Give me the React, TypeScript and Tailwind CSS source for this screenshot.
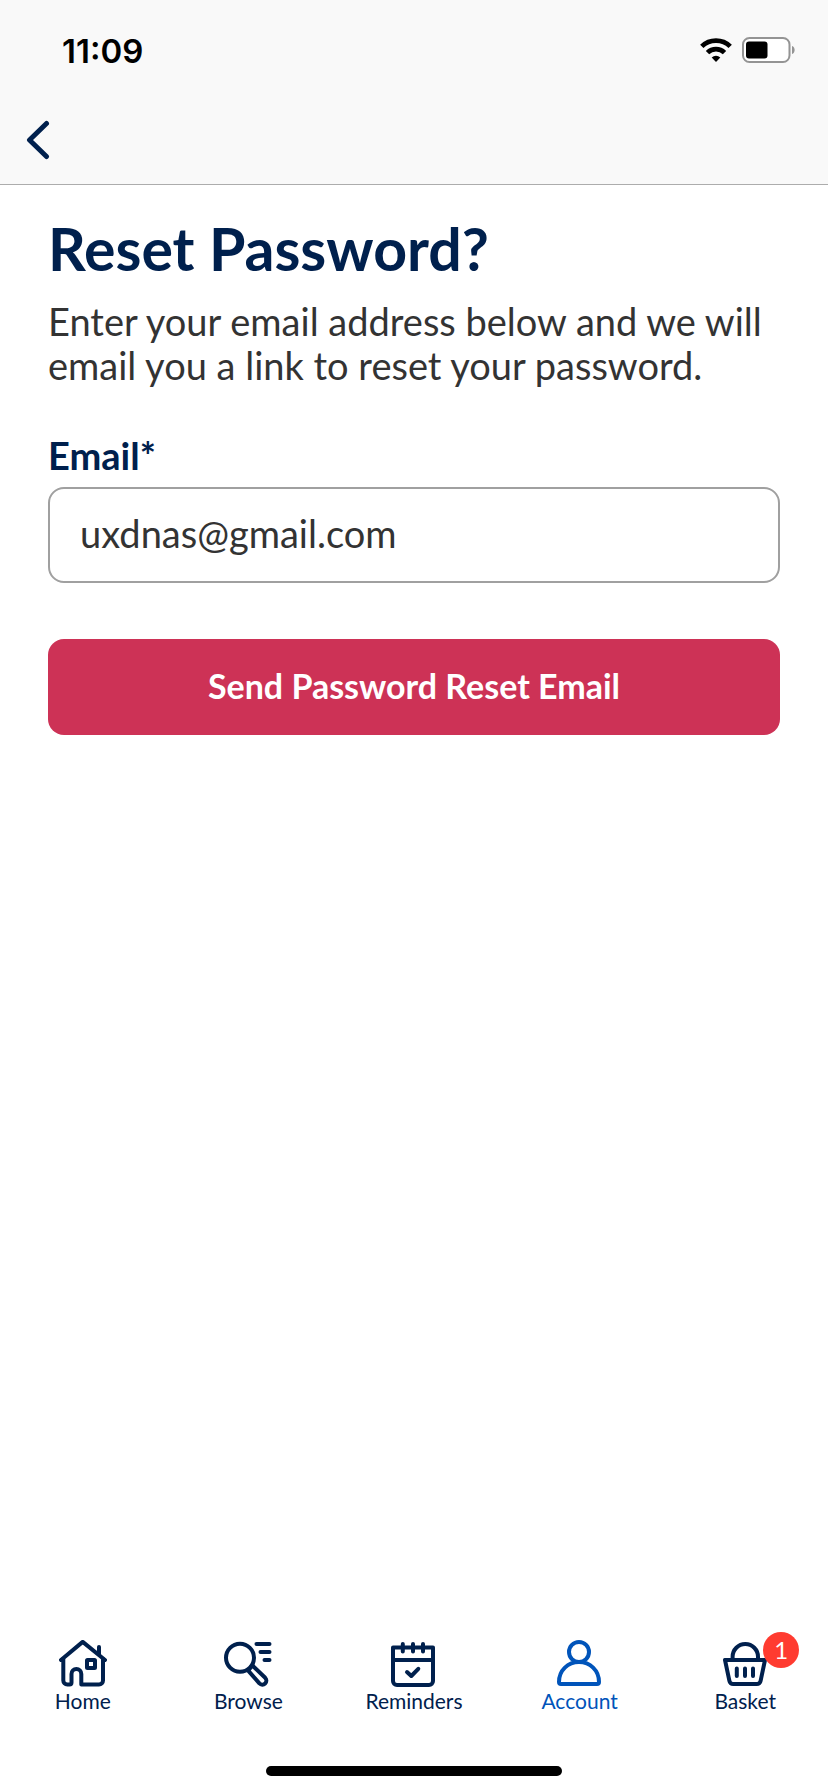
import React, { useState } from 'react';

interface Tab {
  id: string;
  label: string;
  icon: React.ReactNode;
  badge?: number;
}

const TABS: Tab[] = [
  {
    id: 'home',
    label: 'Home',
    icon: (
      <>
        <path d="M2 20 23.7 1.9 46 20" />
        <path d="M40 7v7" />
        <path d="M4.3 19v21.5a4 4 0 0 0 4 4h2.2a2 2 0 0 0 2-2V34a4.9 4.9 0 0 1 9.8 0v10.5H40a4 4 0 0 0 4-4V19" />
        <rect x="28" y="20" width="8" height="8" rx="0.5" />
      </>
    ),
  },
  {
    id: 'browse',
    label: 'Browse',
    icon: (
      <>
        <circle cx="16" cy="17.7" r="14" />
        <path d="M32.5 4H45.5M36.5 12H45.5M40.5 20H45.5" />
        <path d="M28.5 25.5 41.2 37.8a4 4 0 0 1-5.8 5.6L24.2 30.6M28.5 25.5l-4.3 5" />
      </>
    ),
  },
  {
    id: 'reminders',
    label: 'Reminders',
    icon: (
      <>
        <path d="M3 7.5h40V41a4 4 0 0 1-4 4H7a4 4 0 0 1-4-4V7.5ZM3 20h40" />
        <path d="M12.8 4v7.5M23 4v7.5M33 4v7.5" />
        <path d="m17 32 4.3 4 7-7.2" />
      </>
    ),
  },
  {
    id: 'account',
    label: 'Account',
    icon: (
      <>
        <circle cx="23" cy="12" r="10" />
        <path d="M5 44h36a2 2 0 0 0 2-2C43 30.2 34 22 23 22S3 30.2 3 42a2 2 0 0 0 2 2Z" />
      </>
    ),
  },
  {
    id: 'basket',
    label: 'Basket',
    badge: 1,
    icon: (
      <>
        <path d="M11.6 20V16.7a12.7 12.7 0 0 1 25.4 0V20" />
        <path d="M4 20h40l-4.4 20.8a4 4 0 0 1-4 3.2H12.4a4 4 0 0 1-4-3.2L4 20Z" />
        <path d="M15.8 28.5V36M24 28.5V36M32 28.5V36" />
      </>
    ),
  },
];

const StatusBar: React.FC = () => (
  <div className="flex h-24 items-center justify-between pr-8 pl-[62px] pt-1">
    <span className="pt-0.5 font-['Inter',sans-serif] text-[33px] leading-10 font-semibold text-black">11:09</span>
    <div className="flex items-center gap-2.5">
      <svg className="h-6 w-8" viewBox="0 0 32 24" fill="none" stroke="#000" strokeWidth="4.8" aria-hidden="true">
        <path d="M1.8 8.4a20.4 20.4 0 0 1 28.4 0" />
        <path d="M7.5 14.6a12.2 12.2 0 0 1 17 0" />
        <path d="M16 24l-4.3-4.4a6.1 6.1 0 0 1 8.6 0Z" fill="#000" stroke="none" />
      </svg>
      <svg className="h-[26px] w-[54px]" viewBox="0 0 54 26" aria-hidden="true">
        <rect x="1" y="1" width="46.5" height="24" rx="6.5" fill="#fff" stroke="#949494" strokeWidth="2" />
        <rect x="4" y="4.5" width="21.5" height="17" rx="3" fill="#000" />
        <path d="M50 9c3.5 1 3.5 7 0 8Z" fill="#949494" />
      </svg>
    </div>
  </div>
);

const TabBar: React.FC<{ active: string; onSelect: (id: string) => void }> = ({ active, onSelect }) => (
  <nav className="grid grid-cols-5">
    {TABS.map(tab => (
      <button
        key={tab.id}
        type="button"
        onClick={() => onSelect(tab.id)}
        className={`flex flex-col items-center ${tab.id === active ? 'text-[#0054ba]' : 'text-[#00204d]'}`}
      >
        <span className="relative">
          <svg
            className="size-12"
            viewBox="0 0 48 48"
            fill="none"
            stroke="currentColor"
            strokeWidth="4"
            strokeLinecap="round"
            strokeLinejoin="round"
            aria-hidden="true"
          >
            {tab.icon}
          </svg>
          {tab.badge && (
            <span className="absolute -top-2 -right-[30px] flex size-9 items-center justify-center rounded-full bg-[#ff3b30] text-2xl text-white">
              {tab.badge}
            </span>
          )}
        </span>
        <span className="text-[21px] leading-[26px]">{tab.label}</span>
      </button>
    ))}
  </nav>
);

const App: React.FC = () => {
  const [email, setEmail] = useState('uxdnas@gmail.com');
  const [activeTab, setActiveTab] = useState('account');

  return (
    <div className="flex min-h-screen flex-col bg-white font-['Lato',sans-serif]">
      <header className="border-b border-[#acacac] bg-[#f9f9f9]">
        <StatusBar />
        <div className="flex h-[88px] items-center px-5">
          <button type="button" aria-label="Back" className="text-[#00204d]">
            <svg
              className="h-10 w-9"
              viewBox="0 0 36 40"
              fill="none"
              stroke="currentColor"
              strokeWidth="5"
              strokeLinecap="round"
              strokeLinejoin="round"
            >
              <path d="M26.5 3.5 9.5 20l17 16.5" />
            </svg>
          </button>
        </div>
      </header>

      <main className="flex-1 px-12 pt-[30px]">
        <h1 className="text-[59px] leading-[68px] font-bold text-[#00204d]">Reset Password?</h1>
        <p className="mt-4 text-[38px] leading-[44px] text-[#333333]">
          Enter your email address below and we will email you a link to reset your password.
        </p>

        <form onSubmit={e => e.preventDefault()}>
          <label htmlFor="email" className="mt-[46px] block text-[38px] leading-[44px] font-bold text-[#00204d]">
            Email*
          </label>
          <input
            id="email"
            type="email"
            value={email}
            onChange={e => setEmail(e.target.value)}
            className="mt-2.5 h-24 w-full rounded-2xl border-2 border-[#a0a0a0] bg-white px-[30px] pb-1 text-[38px] text-[#333333] outline-none"
          />
          <button
            type="submit"
            className="mt-14 h-24 w-full rounded-2xl bg-[#cd3256] pb-1 text-[34px] font-bold text-white"
          >
            Send Password Reset Email
          </button>
        </form>
      </main>

      <footer>
        <TabBar active={activeTab} onSelect={setActiveTab} />
        <div className="mx-auto mt-[52px] mb-4 h-[10px] w-[296px] rounded-full bg-black" />
      </footer>
    </div>
  );
};

export default App;
